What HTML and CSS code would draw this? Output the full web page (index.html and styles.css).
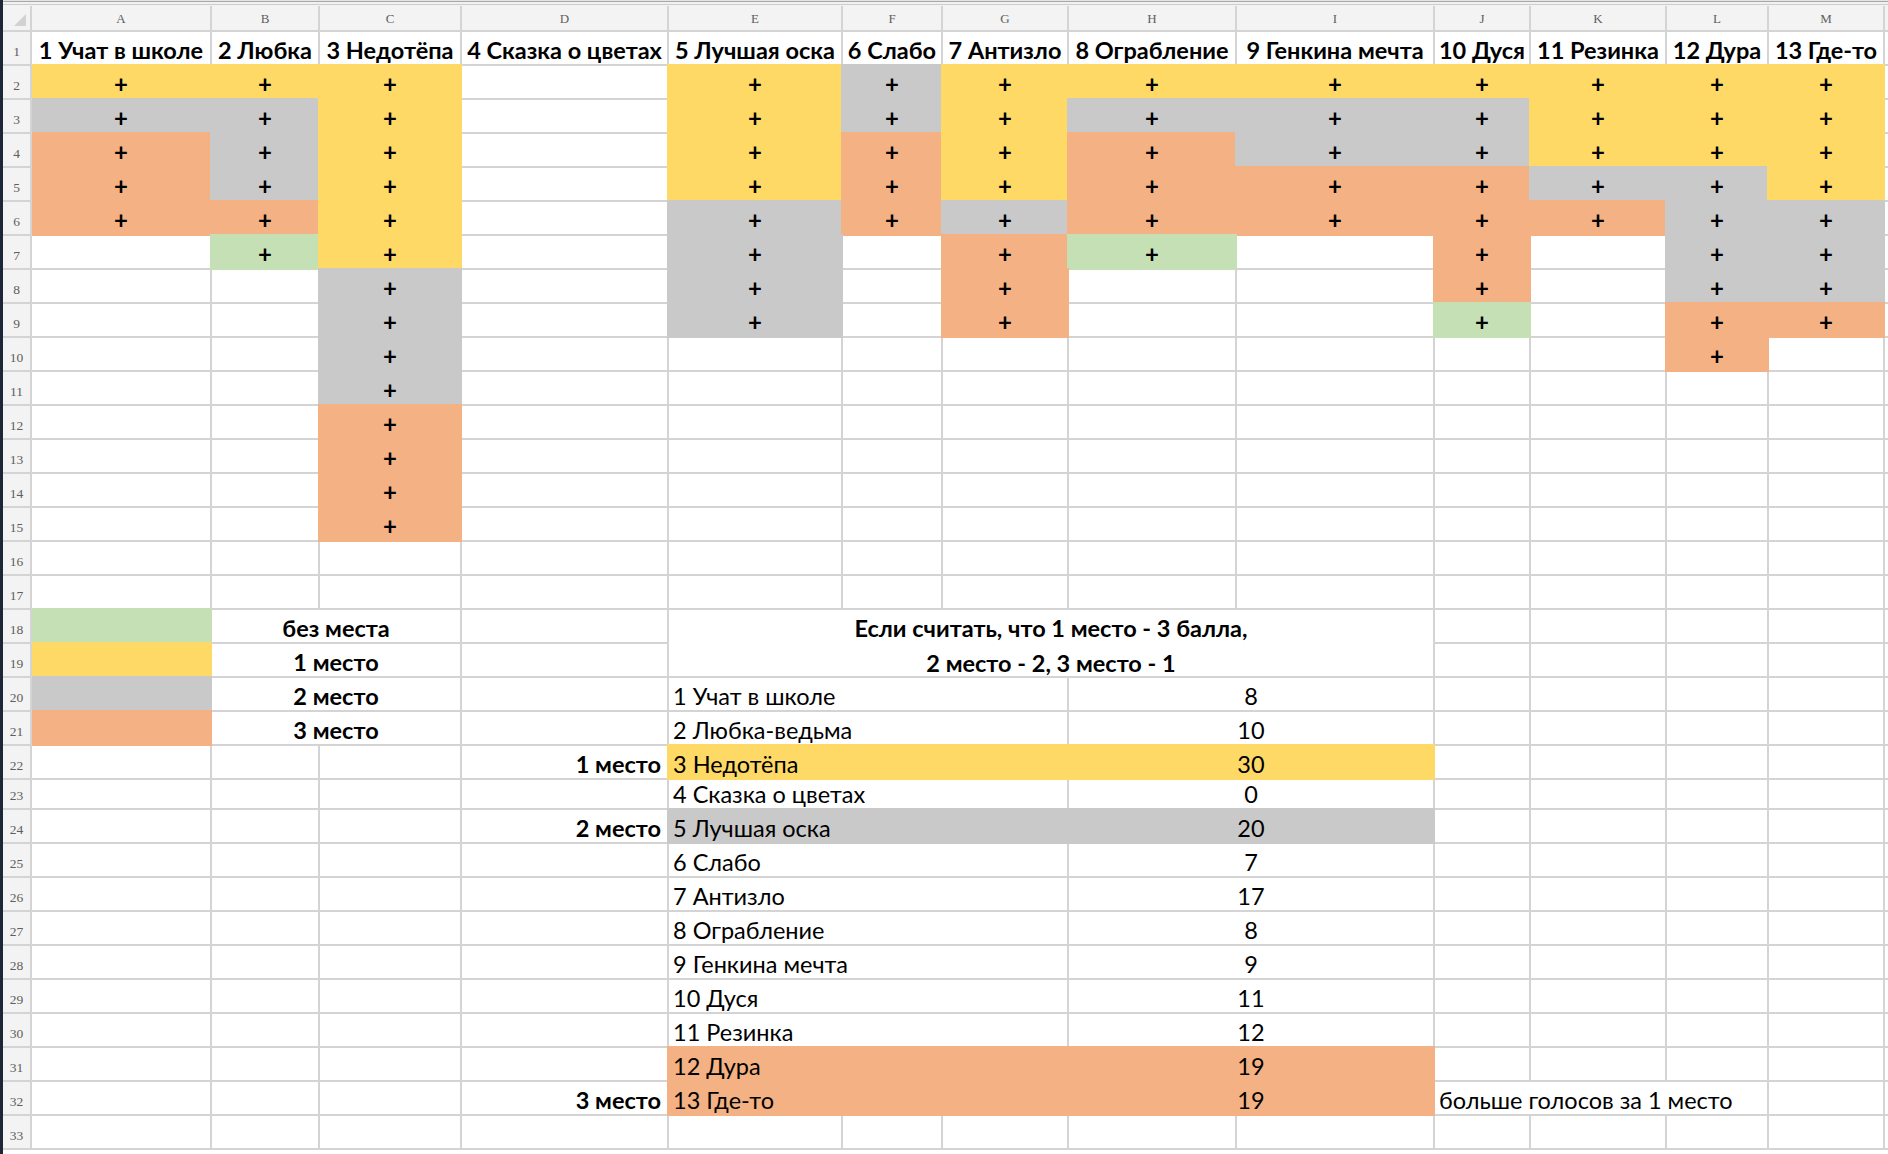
FILE: index.html
```html
<!DOCTYPE html>
<html lang="ru">
<head>
<meta charset="utf-8">
<title>Голосование</title>
<link rel="stylesheet" href="styles.css">
</head>
<body>
<div class="app">
<div class="edge"></div>
<div class="main">
<div class="topbar"></div>
<div class="sheet">
<div class="corner"></div><div class="ch">A</div><div class="ch">B</div><div class="ch">C</div><div class="ch">D</div><div class="ch">E</div><div class="ch">F</div><div class="ch">G</div><div class="ch">H</div><div class="ch">I</div><div class="ch">J</div><div class="ch">K</div><div class="ch">L</div><div class="ch">M</div><div class="ch"></div>

<div class="rh">1</div><div class="hd">1 Учат в школе</div><div class="hd">2 Любка</div><div class="hd">3 Недотёпа</div><div class="hd">4 Сказка о цветах</div><div class="hd">5 Лучшая оска</div><div class="hd">6 Слабо</div><div class="hd">7 Антизло</div><div class="hd">8 Ограбление</div><div class="hd">9 Генкина мечта</div><div class="hd">10 Дуся</div><div class="hd">11 Резинка</div><div class="hd">12 Дура</div><div class="hd">13 Где-то</div><div></div>

<div class="rh">2</div><div class="f y">+</div><div class="f y">+</div><div class="f y">+</div><div></div><div class="f y">+</div><div class="f g">+</div><div class="f y">+</div><div class="f y">+</div><div class="f y">+</div><div class="f y">+</div><div class="f y">+</div><div class="f y">+</div><div class="f y">+</div><div></div>

<div class="rh">3</div><div class="f g">+</div><div class="f g">+</div><div class="f y">+</div><div></div><div class="f y">+</div><div class="f g">+</div><div class="f y">+</div><div class="f g">+</div><div class="f g">+</div><div class="f g">+</div><div class="f y">+</div><div class="f y">+</div><div class="f y">+</div><div></div>

<div class="rh">4</div><div class="f o">+</div><div class="f g">+</div><div class="f y">+</div><div></div><div class="f y">+</div><div class="f o">+</div><div class="f y">+</div><div class="f o">+</div><div class="f g">+</div><div class="f g">+</div><div class="f y">+</div><div class="f y">+</div><div class="f y">+</div><div></div>

<div class="rh">5</div><div class="f o">+</div><div class="f g">+</div><div class="f y">+</div><div></div><div class="f y">+</div><div class="f o">+</div><div class="f y">+</div><div class="f o">+</div><div class="f o">+</div><div class="f o">+</div><div class="f g">+</div><div class="f g">+</div><div class="f y">+</div><div></div>

<div class="rh">6</div><div class="f o">+</div><div class="f o">+</div><div class="f y">+</div><div></div><div class="f g">+</div><div class="f o">+</div><div class="f g">+</div><div class="f o">+</div><div class="f o">+</div><div class="f o">+</div><div class="f o">+</div><div class="f g">+</div><div class="f g">+</div><div></div>

<div class="rh">7</div><div></div><div class="f n">+</div><div class="f y">+</div><div></div><div class="f g">+</div><div></div><div class="f o">+</div><div class="f n">+</div><div></div><div class="f o">+</div><div></div><div class="f g">+</div><div class="f g">+</div><div></div>

<div class="rh">8</div><div></div><div></div><div class="f g">+</div><div></div><div class="f g">+</div><div></div><div class="f o">+</div><div></div><div></div><div class="f o">+</div><div></div><div class="f g">+</div><div class="f g">+</div><div></div>

<div class="rh">9</div><div></div><div></div><div class="f g">+</div><div></div><div class="f g">+</div><div></div><div class="f o">+</div><div></div><div></div><div class="f n">+</div><div></div><div class="f o">+</div><div class="f o">+</div><div></div>

<div class="rh">10</div><div></div><div></div><div class="f g">+</div><div></div><div></div><div></div><div></div><div></div><div></div><div></div><div></div><div class="f o">+</div><div></div><div></div>

<div class="rh">11</div><div></div><div></div><div class="f g">+</div><div></div><div></div><div></div><div></div><div></div><div></div><div></div><div></div><div></div><div></div><div></div>

<div class="rh">12</div><div></div><div></div><div class="f o">+</div><div></div><div></div><div></div><div></div><div></div><div></div><div></div><div></div><div></div><div></div><div></div>

<div class="rh">13</div><div></div><div></div><div class="f o">+</div><div></div><div></div><div></div><div></div><div></div><div></div><div></div><div></div><div></div><div></div><div></div>

<div class="rh">14</div><div></div><div></div><div class="f o">+</div><div></div><div></div><div></div><div></div><div></div><div></div><div></div><div></div><div></div><div></div><div></div>

<div class="rh">15</div><div></div><div></div><div class="f o">+</div><div></div><div></div><div></div><div></div><div></div><div></div><div></div><div></div><div></div><div></div><div></div>

<div class="rh">16</div><div></div><div></div><div></div><div></div><div></div><div></div><div></div><div></div><div></div><div></div><div></div><div></div><div></div><div></div>

<div class="rh">17</div><div></div><div></div><div></div><div></div><div></div><div></div><div></div><div></div><div></div><div></div><div></div><div></div><div></div><div></div>

<div class="rh">18</div><div class="f n"></div><div class="b c s2">без места</div><div></div><div class="b c s5 r2 two"><span>Если считать, что 1 место - 3 балла,<br>2 место - 2, 3 место - 1</span></div><div></div><div></div><div></div><div></div><div></div>

<div class="rh">19</div><div class="f y"></div><div class="b c s2">1 место</div><div></div><div></div><div></div><div></div><div></div><div></div>

<div class="rh">20</div><div class="f g"></div><div class="b c s2">2 место</div><div></div><div class="s3">1 Учат в школе</div><div class="c s2">8</div><div></div><div></div><div></div><div></div><div></div>

<div class="rh">21</div><div class="f o"></div><div class="b c s2">3 место</div><div></div><div class="s3">2 Любка-ведьма</div><div class="c s2">10</div><div></div><div></div><div></div><div></div><div></div>

<div class="rh">22</div><div></div><div></div><div></div><div class="b r">1 место</div><div class="f y l s3">3 Недотёпа</div><div class="f y s2">30</div><div></div><div></div><div></div><div></div><div></div>

<div class="rh">23</div><div></div><div></div><div></div><div></div><div class="s3">4 Сказка о цветах</div><div class="c s2">0</div><div></div><div></div><div></div><div></div><div></div>

<div class="rh">24</div><div></div><div></div><div></div><div class="b r">2 место</div><div class="f g l s3">5 Лучшая оска</div><div class="f g s2">20</div><div></div><div></div><div></div><div></div><div></div>

<div class="rh">25</div><div></div><div></div><div></div><div></div><div class="s3">6 Слабо</div><div class="c s2">7</div><div></div><div></div><div></div><div></div><div></div>

<div class="rh">26</div><div></div><div></div><div></div><div></div><div class="s3">7 Антизло</div><div class="c s2">17</div><div></div><div></div><div></div><div></div><div></div>

<div class="rh">27</div><div></div><div></div><div></div><div></div><div class="s3">8 Ограбление</div><div class="c s2">8</div><div></div><div></div><div></div><div></div><div></div>

<div class="rh">28</div><div></div><div></div><div></div><div></div><div class="s3">9 Генкина мечта</div><div class="c s2">9</div><div></div><div></div><div></div><div></div><div></div>

<div class="rh">29</div><div></div><div></div><div></div><div></div><div class="s3">10 Дуся</div><div class="c s2">11</div><div></div><div></div><div></div><div></div><div></div>

<div class="rh">30</div><div></div><div></div><div></div><div></div><div class="s3">11 Резинка</div><div class="c s2">12</div><div></div><div></div><div></div><div></div><div></div>

<div class="rh">31</div><div></div><div></div><div></div><div></div><div class="f o l s3">12 Дура</div><div class="f o s2">19</div><div></div><div></div><div></div><div></div><div></div>

<div class="rh">32</div><div></div><div></div><div></div><div class="b r">3 место</div><div class="f o l s3">13 Где-то</div><div class="f o s2">19</div><div class="s3">больше голосов за 1 место</div><div></div><div></div>

<div class="rh">33</div><div></div><div></div><div></div><div></div><div></div><div></div><div></div><div></div><div></div><div></div><div></div><div></div><div></div><div></div>
</div>
</div>
</div>
</body>
</html>
```

FILE: styles.css
```css
html, body {
  margin: 0;
  padding: 0;
  background: #ffffff;
}

body {
  width: 1888px;
  height: 1154px;
  overflow: hidden;
  font-family: Lato, "Open Sans", sans-serif;
  color: #000000;
}

.app {
  display: flex;
  height: 1154px;
}

.edge {
  flex: none;
  width: 3px;
  background: #1c2838;
}

.main {
  flex: 1;
  min-width: 0;
}

.topbar {
  height: 6px;
  background: linear-gradient(#e4e4e4 0 1px, #a8a8a8 1px 2px, #f1f1f1 2px 4px, #cdcdcd 4px 5px, #f3f3f3 5px);
}

.sheet {
  display: grid;
  grid-template-columns: 29px 180px 108px 142px 207px 174px 100px 126px 168px 198px 96px 136px 102px 116px 1fr;
  grid-template-rows: 26px repeat(22, 34px) 30px repeat(10, 34px);
}

.sheet > div {
  border-right: 2px solid #d4d4d4;
  border-bottom: 2px solid #d4d4d4;
  display: flex;
  align-items: flex-end;
  justify-content: flex-start;
  padding: 0 4px 1px;
  font-size: 23.5px;
  line-height: 26px;
  white-space: nowrap;
  min-width: 0;
}

.sheet > .ch {
  background: #f3f3f3;
  justify-content: center;
  align-items: center;
  padding: 0;
  font-family: "Liberation Serif", serif;
  font-size: 13px;
  line-height: 1;
  color: #5e5e5e;
}

.sheet > .corner {
  position: relative;
  background: #f3f3f3;
  padding: 0;
}

.corner::after {
  content: "";
  position: absolute;
  right: 4px;
  bottom: 4px;
  width: 12px;
  height: 12px;
  background: #d2d2d2;
  clip-path: polygon(100% 0, 100% 100%, 0 100%);
}

.sheet > .rh {
  background: #f3f3f3;
  justify-content: center;
  padding: 0 0 6px;
  font-family: "Liberation Serif", serif;
  font-size: 13.5px;
  line-height: 1;
  color: #5e5e5e;
}

.sheet > .hd {
  font-weight: 700;
  justify-content: center;
  padding: 0 1px 1px;
}

.sheet > .y { --f: #ffd966; }
.sheet > .g { --f: #c9c9c9; }
.sheet > .o { --f: #f4b183; }
.sheet > .n { --f: #c5e0b4; }

.sheet > .f {
  justify-content: center;
  background: var(--f);
  border-color: var(--f);
  box-shadow: -2px -2px 0 var(--f), 0 -2px 0 var(--f), -2px 0 0 var(--f);
  font-weight: 700;
  font-size: 24px;
}

.sheet > .rh + .f {
  box-shadow: 0 -2px 0 var(--f);
}

.sheet > .s3.f,
.sheet > .s2.f {
  font-weight: 400;
  font-size: 23.5px;
}

.sheet > .b { font-weight: 700; }
.sheet > .c { justify-content: center; }
.sheet > .l { justify-content: flex-start; }
.sheet > .r { justify-content: flex-end; padding-right: 6px; }

.sheet > .s2 { grid-column: span 2; }
.sheet > .s3 { grid-column: span 3; }
.sheet > .s5 { grid-column: span 5; }
.sheet > .r2 { grid-row: span 2; }

.sheet > .two {
  text-align: center;
  line-height: 35px;
  padding-bottom: 0;
}

.two > span {
  margin-bottom: -5px;
}
```
